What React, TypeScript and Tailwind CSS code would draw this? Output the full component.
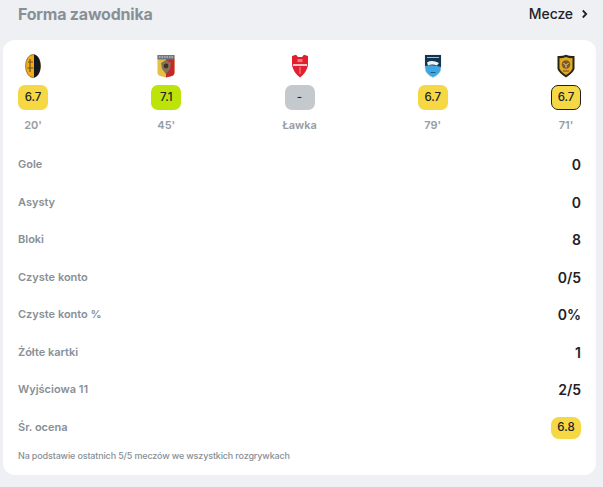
// Forma zawodnika: player form card
const font = { fontFamily: 'Inter, "Noto Sans", sans-serif' }

function CrestOne() {
  return (
    <svg width="18" height="24" viewBox="0 0 18 24">
      <ellipse cx="9" cy="12" rx="7.5" ry="11.5" fill="#f3ab14" stroke="#5a4a18" strokeWidth="0.6" />
      <path d="M10 0.6 C14 1.2 16.5 6 16.5 12 C16.5 18 14 22.8 10 23.4 Z" fill="#16181f" />
      <path d="M4 8 H9 M6 5 V18 M3.5 14 H9.5" stroke="#6b5520" strokeWidth="1.2" fill="none" />
    </svg>
  )
}

function CrestTwo() {
  return (
    <svg width="18" height="24" viewBox="0 0 18 24">
      <path d="M0.5 1 H17.5 V19 Q17 22 13 22.5 L9 23.5 L5 22.5 Q1 22 0.5 19 Z" fill="#e5c043" />
      <path d="M9 5 H17.5 V19 Q17 22 13 22.5 L9 23.5 Z" fill="#c4282c" />
      <rect x="0.5" y="1" width="17" height="4.5" fill="#6e7781" />
      <path d="M2 3 H16" stroke="#dfe3e6" strokeWidth="1" strokeDasharray="1.5 1" />
      <path d="M9 6 L14 9 L13 15 L9 20 L5 15 L4 9 Z" fill="#86725a" />
      <circle cx="9" cy="12" r="2.4" fill="#3f3228" />
    </svg>
  )
}

function CrestThree() {
  return (
    <svg width="18" height="24" viewBox="0 0 18 24">
      <path d="M1 2 L5 0.8 L7 3 H11 L13 0.8 L17 2 V11 Q16 18 9 23.5 Q2 18 1 11 Z" fill="#e0202e" />
      <rect x="2" y="10" width="14" height="2" fill="#f7c4c8" />
      <path d="M9 13 V20" stroke="#f08f96" strokeWidth="1" />
      <path d="M6.5 5 H11.5 V8 H6.5 Z" fill="#f0767f" />
    </svg>
  )
}

function CrestFour() {
  return (
    <svg width="18" height="24" viewBox="0 0 18 24">
      <path d="M1 1 H17 V14 Q17 20 9 23.5 Q1 20 1 14 Z" fill="#3fa6e2" stroke="#c7d4dc" strokeWidth="0.5" />
      <path d="M1 1 H17 V13 Q9 10 1 12 Z" fill="#14344f" />
      <path d="M3 8.5 Q8 5.5 15 9 L13 11.5 Q8 9.5 4 11.5 Z" fill="#eef4f8" />
      <path d="M3 3.5 H15" stroke="#aebdc9" strokeWidth="1" />
      <path d="M6.5 18.5 H11.5" stroke="#1d5c88" strokeWidth="1" />
    </svg>
  )
}

function CrestFive() {
  return (
    <svg width="18" height="24" viewBox="0 0 18 24">
      <path d="M0.5 2 Q5 2.5 9 0.8 Q13 2.5 17.5 2 V15 Q16 19 9 23.5 Q2 19 0.5 15 Z" fill="#2b2414" />
      <path d="M2.5 4 Q6 4.5 9 3 Q12 4.5 15.5 4 V14.5 Q14 18 9 21 Q4 18 2.5 14.5 Z" fill="#e0aa26" />
      <circle cx="9" cy="10.5" r="4.2" fill="#7a5a26" />
      <path d="M6.5 9.5 L8.5 10.5 M11.5 9.5 L9.5 10.5 M9 11 V13.5" stroke="#efe0b8" strokeWidth="1" />
      <path d="M6 17 H12" stroke="#6d5122" strokeWidth="1" />
    </svg>
  )
}

const matches = [
  { crest: <CrestOne />, rating: '6.7', bg: 'bg-[#f5d844]', minute: "20'", border: false },
  { crest: <CrestTwo />, rating: '7.1', bg: 'bg-[#bde408]', minute: "45'", border: false },
  { crest: <CrestThree />, rating: '-', bg: 'bg-[#c4c9cd]', minute: 'Ławka', border: false },
  { crest: <CrestFour />, rating: '6.7', bg: 'bg-[#f5d844]', minute: "79'", border: false },
  { crest: <CrestFive />, rating: '6.7', bg: 'bg-[#f5d844]', minute: "71'", border: true },
]

const stats = [
  { label: 'Gole', value: '0' },
  { label: 'Asysty', value: '0' },
  { label: 'Bloki', value: '8' },
  { label: 'Czyste konto', value: '0/5' },
  { label: 'Czyste konto %', value: '0%' },
  { label: 'Żółte kartki', value: '1' },
  { label: 'Wyjściowa 11', value: '2/5' },
]

export default function App() {
  return (
    <div className="w-[603px] h-[487px] overflow-hidden bg-[#eef0f4] pl-[3px] pr-[7px]" style={font}>
      <div className="h-10 pl-[15px] pr-[5px] pb-[13px] flex items-center justify-between">
        <span className="text-base font-bold tracking-[-0.2px] text-[#889096]">Forma zawodnika</span>
        <div className="flex items-center gap-[6px] text-[#222226]">
          <span className="text-sm font-medium tracking-[-0.1px]">Mecze</span>
          <svg width="12" height="12" viewBox="0 0 12 12" fill="none">
            <path d="M3.8 2.5 L7.2 6 L3.8 9.5" stroke="currentColor" strokeWidth="1.8" />
          </svg>
        </div>
      </div>

      <div className="h-[435px] bg-white rounded-[12px] px-[15px] pt-[14px]">
        <div className="flex justify-between">
          {matches.map((m, i) => (
            <div key={i} className="w-[30px] flex flex-col items-center">
              <div className="h-[24px] flex items-center justify-center">{m.crest}</div>
              <div
                className={`mt-[7px] w-[30px] h-[25px] rounded-[7px] flex items-center justify-center text-[11.5px] font-medium text-[#222226] ${m.bg} ${m.border ? 'border border-[#222226]' : ''}`}
              >
                {m.rating}
              </div>
              <div className="mt-[7px] h-[16px] whitespace-nowrap text-[11px] leading-[16px] font-semibold text-[#969ca2]">
                {m.minute}
              </div>
            </div>
          ))}
        </div>

        <div className="mt-[12.5px]">
          {stats.map((s) => (
            <div key={s.label} className="h-[37.5px] flex items-center justify-between">
              <span className="text-[11px] font-semibold text-[#889096]">{s.label}</span>
              <span className="mt-[2px] text-sm font-semibold text-[#222226]">{s.value}</span>
            </div>
          ))}
          <div className="h-[37.5px] flex items-center justify-between">
            <span className="text-[11px] font-semibold text-[#889096]">Śr. ocena</span>
            <span className="mt-[2px] w-[30px] h-[22px] rounded-[8px] bg-[#f5d844] flex items-center justify-center text-[11.5px] font-medium text-[#222226]">
              6.8
            </span>
          </div>
        </div>

        <p className="mt-[3px] text-[9px] tracking-[-0.15px] leading-[14px] font-medium text-[#889096]">
          Na podstawie ostatnich 5/5 meczów we wszystkich rozgrywkach
        </p>
      </div>
    </div>
  )
}
